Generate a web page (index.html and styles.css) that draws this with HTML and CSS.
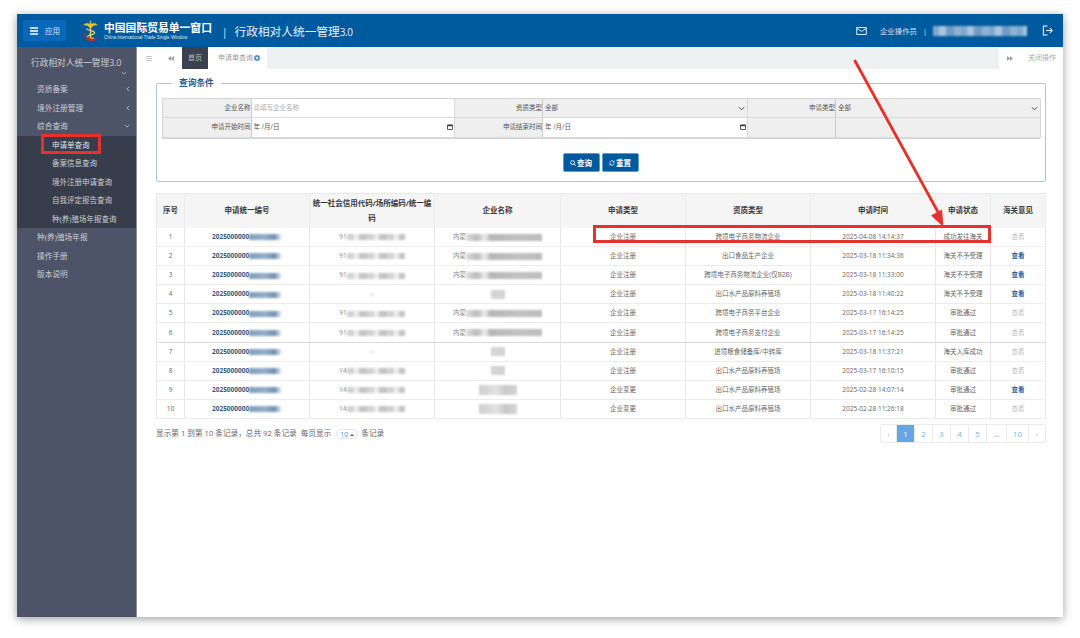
FILE: index.html
```html
<!DOCTYPE html>
<html>
  <head>
    <meta charset="utf-8">
    <title>行政相对人统一管理3.0</title>
    <link rel="stylesheet" href="styles.css">
  </head>
  <body>
    <div class="window">
      <header class="topbar">
        <div class="app-btn">
          <svg class="app-icon" viewBox="0 0 8 8"><path d="M0 1h8M0 4h8M0 7h8" stroke="#fff" stroke-width="1.3"/></svg>
          <span>应用</span>
        </div>
        <svg class="logo" viewBox="0 0 18 24">
          <path d="M9 0l1.400 2.600H7.600z" fill="#e8b020"/>
          <path d="M1 6C3 2.600 7 3.400 9 5c2-1.600 6-2.400 8 1-3-.6-5 .4-6.600 2.200H7.600C6 6.400 4 5.400 1 6z" fill="#f0bd25"/>
          <path d="M8.200 3h1.600v19H8.200z" fill="#f0c840"/>
          <path d="M4.500 9.500c3 2.500 9 2 9 4.500s-8 2-8 4.500 5 2.500 7 1" fill="none" stroke="#f0d060" stroke-width="1.400"/>
          <path d="M2.500 13c-1.500 6 3 10 7 10s6-1.500 7-4c-3 2.500-11 3-14-6z" fill="#b0302c"/>
        </svg>
        <div class="brand">
          <div class="brand-cn">中国国际贸易单一窗口</div>
          <div class="brand-en">China International Trade Single Window</div>
        </div>
        <div class="sys-title"><span class="sys-sep">|</span>行政相对人统一管理<span class="sys-ver">3.0</span></div>
        <div class="top-right">
          <svg class="mail-icon" viewBox="0 0 12 9"><path d="M.6.6h10.800v7.800H.6zM.6 1.500L6 5l5.400-3.500" fill="none" stroke="#fff" stroke-width="1"/></svg>
          <span class="role">企业操作员</span>
          <span class="role-sep">|</span>
          <span class="user-blur"></span>
          <svg class="exit-icon" viewBox="0 0 12 12"><path d="M6 1H1.500v10H6M4.500 6h6.500M8.500 3.300L11 6 8.500 8.700" fill="none" stroke="#fff" stroke-width="1.100"/></svg>
        </div>
      </header>

      <div class="main">
        <aside class="sidebar">
          <div class="side-title">行政相对人统一管理3.0</div>
          <div class="side-chevron"><svg class="chev" viewBox="0 0 8 5"><path d="M1 1l3 3 3-3" fill="none" stroke="#c6cad3" stroke-width="1"/></svg></div>
          <ul class="side-menu">
            <li>资质备案<svg class="arrow-left" viewBox="0 0 5 8"><path d="M4 1L1 4l3 3" fill="none" stroke="#c6cad3"/></svg></li>
            <li>境外注册管理<svg class="arrow-left" viewBox="0 0 5 8"><path d="M4 1L1 4l3 3" fill="none" stroke="#c6cad3"/></svg></li>
            <li>综合查询<svg class="arrow-down" viewBox="0 0 8 5"><path d="M1 1l3 3 3-3" fill="none" stroke="#c6cad3"/></svg></li>
          </ul>
          <ul class="side-sub">
            <li class="active">申请单查询</li>
            <li>备案信息查询</li>
            <li>境外注册申请查询</li>
            <li>自我评定报告查询</li>
            <li>种(养)殖场年报查询</li>
          </ul>
          <ul class="side-menu">
            <li>种(养)殖场年报</li>
            <li>操作手册</li>
            <li>版本说明</li>
          </ul>
        </aside>

        <section class="content">
          <nav class="tabs">
            <div class="tab-tool tab-menu"><svg viewBox="0 0 7 6"><path d="M0 .5h7M0 3h7M0 5.500h7" stroke="#aaa" stroke-width=".9"/></svg></div>
            <div class="tab-tool tab-prev"><svg viewBox="0 0 7 6"><path d="M3.500 0v6L0 3zM7 0v6L3.500 3z" fill="#999"/></svg></div>
            <div class="tab-home">首页</div>
            <div class="tab-current">申请单查询<span class="tab-close"></span></div>
            <div class="tab-fill"></div>
            <div class="tab-tool tab-next"><svg viewBox="0 0 7 6"><path d="M0 0v6l3.500-3zM3.500 0v6L7 3z" fill="#999"/></svg></div>
            <div class="tab-closeall">关闭操作</div>
          </nav>

          <div class="page">
            <fieldset class="query">
              <legend>查询条件</legend>
              <div class="query-grid">
                <div class="q-label">企业名称</div>
                <div class="q-field q-hint">请填写企业名称</div>
                <div class="q-label">资质类型</div>
                <div class="q-field q-select">全部<svg class="q-chev" viewBox="0 0 8 5"><path d="M1 1l3 3 3-3" fill="none" stroke="#444" stroke-width="1.100"/></svg></div>
                <div class="q-label">申请类型</div>
                <div class="q-field q-select">全部<svg class="q-chev" viewBox="0 0 8 5"><path d="M1 1l3 3 3-3" fill="none" stroke="#444" stroke-width="1.100"/></svg></div>
                <div class="q-label">申请开始时间</div>
                <div class="q-field q-date">年 /月/日<svg class="q-cal" viewBox="0 0 6 6"><path d="M.5 1h5v4.500h-5z" fill="none" stroke="#333" stroke-width=".8"/><path d="M.5.800h5v1.400h-5z" fill="#333"/></svg></div>
                <div class="q-label">申请结束时间</div>
                <div class="q-field q-date">年 /月/日<svg class="q-cal" viewBox="0 0 6 6"><path d="M.5 1h5v4.500h-5z" fill="none" stroke="#333" stroke-width=".8"/><path d="M.5.800h5v1.400h-5z" fill="#333"/></svg></div>
                <div class="q-label"></div>
                <div class="q-field q-select"></div>
              </div>
              <div class="query-actions">
                <button class="btn"><svg viewBox="0 0 7 7"><circle cx="3" cy="3" r="2.300" fill="none" stroke="#fff"/><path d="M4.700 4.700L6.800 6.800" stroke="#fff"/></svg>查询</button>
                <button class="btn"><svg viewBox="0 0 7 7"><path d="M1 3a2.600 2.600 0 0 1 4.700-1M6 4a2.600 2.600 0 0 1-4.700 1" fill="none" stroke="#fff" stroke-width=".9"/><path d="M6.300.6v2.200H4.200zM.7 6.400V4.200h2.100z" fill="#fff"/></svg>重置</button>
              </div>
            </fieldset>

            <table class="records">
              <colgroup>
                <col class="c-no"><col class="c-code"><col class="c-credit"><col class="c-name"><col class="c-type">
                <col class="c-qual"><col class="c-time"><col class="c-state"><col class="c-view">
              </colgroup>
              <thead>
                <tr>
                  <th>序号</th>
                  <th>申请统一编号</th>
                  <th>统一社会信用代码/场所编码/统一编码</th>
                  <th>企业名称</th>
                  <th>申请类型</th>
                  <th>资质类型</th>
                  <th>申请时间</th>
                  <th>申请状态</th>
                  <th>海关意见</th>
                </tr>
              </thead>
              <tbody>
                <tr>
                  <td>1</td>
                  <td class="code">2025000000<i class="smear smear-blue"></i></td>
                  <td><span class="lead">91</span><i class="smear smear-wide"></i></td>
                  <td><span class="lead">内蒙</span><i class="smear smear-name"></i></td>
                  <td>企业注册</td><td>跨境电子商务物流企业</td><td>2025-04-08 14:14:37</td><td>成功发往海关</td><td class="off">查看</td>
                </tr>
                <tr>
                  <td>2</td>
                  <td class="code">2025000000<i class="smear smear-blue"></i></td>
                  <td><span class="lead">91</span><i class="smear smear-wide"></i></td>
                  <td><span class="lead">内蒙</span><i class="smear smear-name"></i></td>
                  <td>企业注册</td><td>出口食品生产企业</td><td>2025-03-18 11:34:36</td><td>海关不予受理</td><td class="view">查看</td>
                </tr>
                <tr>
                  <td>3</td>
                  <td class="code">2025000000<i class="smear smear-blue"></i></td>
                  <td><span class="lead">91</span><i class="smear smear-wide"></i></td>
                  <td><span class="lead">内蒙</span><i class="smear smear-name"></i></td>
                  <td>企业注册</td><td>跨境电子商务物流企业(仅B2B)</td><td>2025-03-18 11:33:00</td><td>海关不予受理</td><td class="view">查看</td>
                </tr>
                <tr>
                  <td>4</td>
                  <td class="code">2025000000<i class="smear smear-blue"></i></td>
                  <td><i class="smear smear-dot"></i></td>
                  <td><i class="smear smear-short"></i></td>
                  <td>企业注册</td><td>出口水产品原料养殖场</td><td>2025-03-18 11:40:22</td><td>海关不予受理</td><td class="view">查看</td>
                </tr>
                <tr>
                  <td>5</td>
                  <td class="code">2025000000<i class="smear smear-blue"></i></td>
                  <td><span class="lead">91</span><i class="smear smear-wide"></i></td>
                  <td><span class="lead">内蒙</span><i class="smear smear-name"></i></td>
                  <td>企业注册</td><td>跨境电子商务平台企业</td><td>2025-03-17 16:14:25</td><td>审批通过</td><td class="off">查看</td>
                </tr>
                <tr>
                  <td>6</td>
                  <td class="code">2025000000<i class="smear smear-blue"></i></td>
                  <td><span class="lead">91</span><i class="smear smear-wide"></i></td>
                  <td><span class="lead">内蒙</span><i class="smear smear-name"></i></td>
                  <td>企业注册</td><td>跨境电子商务支付企业</td><td>2025-03-17 16:14:25</td><td>审批通过</td><td class="off">查看</td>
                </tr>
                <tr>
                  <td>7</td>
                  <td class="code">2025000000<i class="smear smear-blue"></i></td>
                  <td><i class="smear smear-dot"></i></td>
                  <td><i class="smear smear-short"></i></td>
                  <td>企业注册</td><td>进境粮食储备库/中转库</td><td>2025-03-18 11:37:21</td><td>海关入库成功</td><td class="off">查看</td>
                </tr>
                <tr>
                  <td>8</td>
                  <td class="code">2025000000<i class="smear smear-blue"></i></td>
                  <td><span class="lead">Y4</span><i class="smear smear-wide"></i></td>
                  <td><i class="smear smear-short"></i></td>
                  <td>企业注册</td><td>出口水产品原料养殖场</td><td>2025-03-17 16:10:15</td><td>审批通过</td><td class="off">查看</td>
                </tr>
                <tr>
                  <td>9</td>
                  <td class="code">2025000000<i class="smear smear-blue"></i></td>
                  <td><span class="lead">Y4</span><i class="smear smear-wide"></i></td>
                  <td><i class="smear smear-mid"></i></td>
                  <td>企业变更</td><td>出口水产品原料养殖场</td><td>2025-02-28 14:07:14</td><td>审批通过</td><td class="view">查看</td>
                </tr>
                <tr>
                  <td>10</td>
                  <td class="code">2025000000<i class="smear smear-blue"></i></td>
                  <td><span class="lead">Y4</span><i class="smear smear-wide"></i></td>
                  <td><i class="smear smear-mid"></i></td>
                  <td>企业变更</td><td>出口水产品原料养殖场</td><td>2025-02-28 11:26:18</td><td>审批通过</td><td class="off">查看</td>
                </tr>
              </tbody>
            </table>

            <div class="table-foot">
              <div class="summary">显示第 1 到第 10 条记录，总共 92 条记录&nbsp; 每页显示 <span class="page-size">10<i class="caret"></i></span> 条记录</div>
              <div class="pager">
                <span class="p-arrow">‹</span>
                <span class="p-on">1</span>
                <span>2</span>
                <span>3</span>
                <span>4</span>
                <span>5</span>
                <span class="p-gap">...</span>
                <span class="p-last">10</span>
                <span class="p-arrow">›</span>
              </div>
            </div>
          </div>
        </section>
      </div>
    </div>

    <!-- red marks drawn over the screenshot -->
    <div class="mark mark-side"></div>
    <div class="mark mark-row"></div>
    <svg class="mark-arrow" viewBox="0 0 1080 638">
      <path d="M854.500 60L938 212" stroke="#e5322d" stroke-width="2.800" fill="none"/>
      <path d="M943.500 227L931 215.500 942 209.500z" fill="#e5322d"/>
    </svg>
  </body>
</html>
```

FILE: styles.css
```css
* {
  box-sizing: border-box;
}

body {
  margin: 0;
  background-color: #fff;
  font-family: "Open Sans", "Noto Sans CJK SC", sans-serif;
  font-size: 6.5px;
  color: #555;
  overflow: hidden;
  height: 638px;
}

ul {
  list-style-type: none;
  margin: 0;
  padding: 0;
}

.window {
  margin: 14px 17px 0;
  width: 1046px;
  height: 603px;
  display: flex;
  flex-direction: column;
  box-shadow: 0 2px 9px rgba(0, 0, 0, 0.38);
}

/* top bar */
.topbar {
  height: 33px;
  flex: none;
  display: flex;
  align-items: center;
  background-color: #005a9e;
  color: #fff;
  padding-left: 6px;
}

.app-btn {
  width: 43px;
  height: 21px;
  display: flex;
  align-items: center;
  padding-left: 7px;
  gap: 7px;
  background-color: #0a68bb;
  border-radius: 2px;
  font-size: 7.500px;
  color: #cfe2f5;
}

.app-icon {
  width: 8px;
  height: 8px;
}

.logo {
  width: 17px;
  height: 22px;
  margin-left: 16px;
}

.brand {
  margin-left: 5px;
  width: 119px;
}

.brand-cn {
  font-size: 10.800px;
  font-weight: 700;
  line-height: 13px;
  margin-top: 1px;
}

.brand-en {
  font-family: "Liberation Sans", sans-serif;
  font-size: 4.600px;
  line-height: 6px;
  margin-top: 1px;
  color: #dbe8f4;
  white-space: nowrap;
}

.sys-title {
  font-size: 11.700px;
  color: #e8f0f8;
  white-space: nowrap;
}

.sys-sep {
  font-size: 10px;
  margin-right: 7px;
  margin-left: -1px;
}

.sys-ver {
  font-size: 10px;
  letter-spacing: -0.4px;
}

.top-right {
  margin-left: auto;
  display: flex;
  align-items: center;
  font-size: 7.400px;
  color: #d7e5f2;
  padding-right: 10px;
}

.mail-icon {
  width: 11px;
  height: 8px;
  margin-right: 13px;
}

.role-sep {
  margin: 0 6px;
}

.user-blur {
  width: 94px;
  height: 10px;
  margin-right: 15px;
  filter: blur(1.200px);
  background: repeating-linear-gradient(90deg, #7fa9cc 0 6px, #a9c6de 6px 13px, #6f9cc3 13px 21px, #8db3d3 21px 28px);
}

.exit-icon {
  width: 11px;
  height: 11px;
}

.main {
  flex: 1;
  display: flex;
  min-height: 0;
}

/* sidebar */
.sidebar {
  width: 120px;
  flex: none;
  background-color: #4d5467;
  color: #c9cdd6;
  font-size: 7.700px;
  border-right: 1px solid #8a90a0;
}

.side-title {
  font-size: 8.700px;
  line-height: 12px;
  margin: 10px 0 0 14px;
  white-space: nowrap;
}

.side-chevron {
  height: 8px;
  padding: 2px 0 0 104px;
  margin-bottom: 3px;
}

.chev {
  display: block;
  width: 6px;
  height: 4px;
}

.side-menu li {
  height: 18.500px;
  line-height: 18.500px;
  padding-left: 20px;
  position: relative;
}

.arrow-left {
  position: absolute;
  left: 109px;
  top: 6px;
  width: 4px;
  height: 6px;
}

.arrow-down {
  position: absolute;
  left: 107px;
  top: 7px;
  width: 6px;
  height: 4px;
}

.side-sub {
  background-color: #373d4a;
  font-size: 7.500px;
}

.side-sub li {
  height: 18.500px;
  line-height: 18.500px;
  padding-left: 35px;
  white-space: nowrap;
}

.side-sub .active {
  color: #dfe2e8;
}

/* tabs */
.content {
  flex: 1;
  min-width: 0;
  background-color: #fff;
}

.tabs {
  height: 22px;
  display: flex;
  align-items: stretch;
  background-color: #eef1f2;
  color: #888;
  font-size: 7px;
  line-height: 21px;
}

.tab-tool {
  background-color: #fff;
  display: flex;
  align-items: center;
  justify-content: center;
}

.tab-tool svg {
  width: 6px;
  height: 5px;
}

.tab-menu {
  width: 23px;
}

.tab-prev {
  width: 22px;
}

.tab-home {
  width: 26px;
  text-align: center;
  background-color: #3b414f;
  color: #b8bcc5;
}

.tab-current {
  width: 59px;
  padding-left: 10px;
  background-color: #fff;
  white-space: nowrap;
  color: #999;
}

.tab-close {
  display: inline-block;
  width: 6px;
  height: 6px;
  margin-left: 1px;
  vertical-align: -0.5px;
  border-radius: 50%;
  border: 2px solid #5f93c9;
  background-color: #fff;
}

.tab-fill {
  flex: 1;
}

.tab-next {
  width: 22px;
}

.tab-closeall {
  width: 42px;
  text-align: center;
  background-color: #fff;
  color: #aaa;
  white-space: nowrap;
}

/* page body */
.page {
  padding: 14px 17px 0 19px;
}

.query {
  margin: 0;
  height: 99px;
  width: 890px;
  padding: 8px 5px 0 5px;
  border: 1px solid #a9c6de;
  border-radius: 2px;
  position: relative;
  display: block;
}

.query legend {
  margin-left: 10px;
  padding: 0 7px;
  line-height: 0;
  height: 1px;
  font-size: 8.700px;
  font-weight: 700;
  color: #1d5a93;
}

.query-grid {
  display: grid;
  grid-template-columns: 88.500px 203.500px 88px 205px 88px 205px;
  grid-template-rows: 19px 20px;
  width: 878px;
  margin-top: 6px;
  border: 1px solid #d4d4d4;
  font-size: 6.500px;
}

.q-label {
  background-color: #efefef;
  text-align: right;
  line-height: 18px;
  border-right: 1px solid #c9c9c9;
  border-bottom: 1px solid #dadada;
}

.q-field {
  background-color: #fff;
  line-height: 18px;
  padding-left: 2px;
  border-right: 1px solid #d8d8d8;
  border-bottom: 1px solid #dadada;
  position: relative;
}

.q-hint {
  color: #aaa;
}

.q-select {
  background-color: #efefef;
}

.q-chev {
  position: absolute;
  right: 2px;
  top: 7px;
  width: 7px;
  height: 5px;
}

.q-cal {
  position: absolute;
  right: 1px;
  top: 6px;
  width: 6px;
  height: 6px;
}

.query-actions {
  display: flex;
  justify-content: center;
  gap: 2px;
  margin-top: 14px;
  margin-right: 1px;
}

.btn {
  width: 37px;
  height: 19px;
  padding: 0;
  border: 1px solid #5d9bd0;
  border-radius: 2px;
  background-color: #005a9e;
  color: #fff;
  font-family: inherit;
  font-size: 7.500px;
  font-weight: 700;
  display: flex;
  align-items: center;
  justify-content: center;
  gap: 1px;
}

.btn svg {
  width: 6px;
  height: 6px;
}

/* records table */
.records {
  margin-top: 11px;
  width: 889px;
  border-collapse: collapse;
  table-layout: fixed;
  border: 1px solid #e9e6e6;
}

.c-no { width: 28px; }
.c-code { width: 125px; }
.c-credit { width: 125px; }
.c-name { width: 126px; }
.c-type { width: 125px; }
.c-qual { width: 125px; }
.c-time { width: 125px; }
.c-state { width: 55px; }
.c-view { width: 55px; }

.records th {
  height: 34px;
  padding: 0 2px;
  background-color: #f5f5f5;
  border-right: 1px solid #ececec;
  font-size: 7.500px;
  font-weight: 700;
  line-height: 15px;
  color: #3c3c3c;
}

.records td {
  height: 19.100px;
  padding: 0;
  text-align: center;
  border-right: 1px solid #e9e4e6;
  border-bottom: 1px solid #efeaec;
  white-space: nowrap;
  line-height: 12px;
  color: #666;
}

.records tr:nth-child(6) td {
  border-bottom-color: #ddd6da;
}

.records td.code {
  font-weight: 700;
  color: #33597f;
  text-align: left;
  padding-left: 27px;
}

.records td.view {
  font-weight: 700;
  color: #2a5f96;
}

.records td.off {
  color: #bbb;
}

.lead {
  color: #888;
}

/* blurred-out values */
.smear {
  display: inline-block;
  height: 12px;
  vertical-align: middle;
  filter: blur(1.300px);
}

.smear-blue {
  width: 32px;
  height: 6px;
  background: linear-gradient(90deg, #7f9db9, #93aec6 50%, #6e91b1 80%, #dfe8ef);
}

.smear-wide {
  width: 58px;
  height: 6px;
  background: repeating-linear-gradient(90deg, #d2d2d2 0 7px, #ececec 7px 12px, #c4c4c4 12px 20px);
}

.smear-name {
  width: 76px;
  height: 7px;
  background: linear-gradient(90deg, #ddd 0, #bbb 15%, #eee 25%, #b5b5b5 32%, #c2c2c2 70%, #bbb 100%);
}

.smear-dot {
  width: 4px;
  height: 4px;
  background-color: #eee;
}

.smear-short {
  width: 14px;
  height: 9px;
  background-color: #d4d4d4;
}

.smear-mid {
  width: 38px;
  height: 10px;
  background: linear-gradient(90deg, #cfcfcf, #e2e2e2 45%, #c8c8c8 70%, #d4d4d4);
}

/* footer with pager */
.table-foot {
  display: flex;
  justify-content: space-between;
  align-items: center;
  width: 890px;
  margin-top: 5px;
}

.summary {
  font-size: 7.650px;
  color: #666;
  white-space: nowrap;
}

.page-size {
  display: inline-block;
  width: 22px;
  height: 10px;
  margin: 0 1px 0 3px;
  line-height: 10px;
  text-align: center;
  vertical-align: middle;
  border: 1px solid #dce6ef;
  border-radius: 6px;
  color: #4f8cc4;
  font-size: 7px;
}

.caret {
  display: inline-block;
  width: 0;
  height: 0;
  margin-left: 2px;
  vertical-align: 1px;
  border: 2px solid transparent;
  border-top: 0;
  border-bottom: 2.500px solid #555;
}

.pager {
  display: flex;
  height: 19px;
  border: 1px solid #eaeaea;
  border-radius: 2px;
  font-size: 8px;
  line-height: 17px;
  color: #7fb0dd;
}

.pager span {
  width: 18px;
  text-align: center;
  border-right: 1px solid #eaeaea;
}

.pager span:last-child {
  border-right: 0;
}

.pager .p-arrow {
  width: 16px;
  color: #9dbfdf;
}

.pager .p-on {
  background-color: #64a6e6;
  color: #fff;
}

.pager .p-gap {
  width: 20px;
  color: #888;
}

.pager .p-last {
  width: 22px;
}

/* red annotation marks */
.mark {
  position: absolute;
  border: 3px solid #e5322d;
  pointer-events: none;
}

.mark-side {
  left: 41px;
  top: 134px;
  width: 60px;
  height: 20px;
}

.mark-row {
  left: 593px;
  top: 225px;
  width: 398px;
  height: 18px;
}

.mark-arrow {
  position: absolute;
  left: 0;
  top: 0;
  width: 1080px;
  height: 638px;
  pointer-events: none;
}
```
